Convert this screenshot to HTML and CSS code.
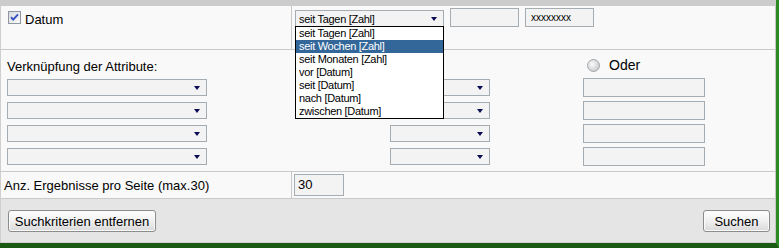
FILE: index.html
```html
<!DOCTYPE html>
<html lang="de">
<head>
	<meta charset="UTF-8">
	<title>Suche</title>
	<link rel="stylesheet" href="styles.css">
</head>
<body>
	<div class="frame">
		<div class="topbar"></div>
		<div class="form">
			<div class="row row-date">
				<div class="cell cell-label">
					<label class="check">
						<svg class="box" width="13" height="13" viewBox="0 0 13 13">
							<defs>
								<linearGradient id="cbg" x1="0" y1="0" x2="1" y2="1">
									<stop offset="0" stop-color="#d6d9dd"/>
									<stop offset="1" stop-color="#fbfbfb"/>
								</linearGradient>
							</defs>
							<rect x="0.5" y="0.5" width="12" height="12" fill="url(#cbg)" stroke="#8d97a3"/>
							<path d="M3 6.2 L5.2 8.6 L10 3.4" fill="none" stroke="#2f4fc4" stroke-width="1.8"/>
						</svg>
						<span>Datum</span>
					</label>
				</div>
				<div class="cell cell-date">
					<div class="pick">
						<div class="select select-wide"><span>seit Tagen [Zahl]</span><i class="arrow"></i></div>
						<ul class="pick-list">
							<li>seit Tagen [Zahl]</li>
							<li class="active">seit Wochen [Zahl]</li>
							<li>seit Monaten [Zahl]</li>
							<li>vor [Datum]</li>
							<li>seit [Datum]</li>
							<li>nach [Datum]</li>
							<li>zwischen [Datum]</li>
						</ul>
					</div>
					<div class="field field-date"></div>
					<div class="field field-date field-mask">xxxxxxxx</div>
				</div>
			</div>

			<div class="row row-attr">
				<div class="attr-grid">
					<div class="attr-title">Verknüpfung der Attribute:</div>
					<label class="attr-or">
						<svg width="13" height="13" viewBox="0 0 13 13">
							<defs>
								<radialGradient id="rbg" cx="0.4" cy="0.4" r="0.6">
									<stop offset="0" stop-color="#fbfbfb"/>
									<stop offset="1" stop-color="#c9cccf"/>
								</radialGradient>
							</defs>
							<circle cx="6.5" cy="6.5" r="6" fill="url(#rbg)" stroke="#a3a7ab"/>
						</svg>
						<span>Oder</span>
					</label>

					<div class="select attr-a"><span></span><i class="arrow"></i></div>
					<div class="select attr-b"><span></span><i class="arrow"></i></div>
					<div class="field attr-c"></div>

					<div class="select attr-a"><span></span><i class="arrow"></i></div>
					<div class="select attr-b"><span></span><i class="arrow"></i></div>
					<div class="field attr-c"></div>

					<div class="select attr-a"><span></span><i class="arrow"></i></div>
					<div class="select attr-b"><span></span><i class="arrow"></i></div>
					<div class="field attr-c"></div>

					<div class="select attr-a"><span></span><i class="arrow"></i></div>
					<div class="select attr-b"><span></span><i class="arrow"></i></div>
					<div class="field attr-c"></div>
				</div>
			</div>

			<div class="row row-count">
				<div class="cell cell-label cell-count">Anz. Ergebnisse pro Seite (max.30)</div>
				<div class="cell">
					<div class="field field-count">30</div>
				</div>
			</div>

			<div class="actions">
				<button class="btn btn-reset">Suchkriterien entfernen</button>
				<button class="btn btn-search">Suchen</button>
			</div>
		</div>
	</div>
</body>
</html>
```

FILE: styles.css
```css
*{
	margin:0;
	padding:0;
	box-sizing: border-box;
}
body{
	font-family: "Liberation Sans", Arial, sans-serif;
	font-size: 13px;
	color: #000;
	background: #fff;
}
.frame{
	width: 779px;
	height: 248px;
	border-right: 3px solid #2c8a23;
	border-bottom: 5px solid #1b5a12;
}
.topbar{
	height: 6px;
	background: #cccccc;
}
.form{
	border-left: 1px solid #cfcfcf;
	border-right: 1px solid #c6c6c6;
	background: #f9f9f9;
}
.row{
	display: flex;
	border-bottom: 1px solid #c9c9c9;
}
.cell-label{
	width: 291px;
	border-right: 1px solid #c9c9c9;
}

/* Datum */
.row-date{
	height: 44px;
}
.row-date .cell-label{
	padding: 5px 0 0 7px;
}
.check{
	display: flex;
	align-items: flex-start;
	line-height: 15px;
}
.check .box{
	flex: none;
	margin-right: 4px;
}
.check span{
	margin-top: 1px;
}
.cell-date{
	display: flex;
	align-items: flex-start;
	gap: 6px;
	padding: 2px 0 0 3px;
}
.pick{
	position: relative;
	margin-top: 2px;
}
.select{
	display: flex;
	align-items: center;
	justify-content: space-between;
	height: 17px;
	padding: 0 6px 0 3px;
	background: #f3f3f3;
	border: 1px solid #a5acb2;
	font-size: 11px;
	letter-spacing: -0.3px;
}
.select-wide{
	width: 149px;
}
.arrow{
	width: 0;
	height: 0;
	border-left: 3px solid transparent;
	border-right: 3px solid transparent;
	border-top: 4px solid #0b0b55;
}
.pick-list{
	position: absolute;
	top: 16px;
	left: 0;
	width: 149px;
	list-style: none;
	background: #fff;
	border: 1px solid #000;
	font-size: 11px;
	letter-spacing: -0.3px;
}
.pick-list li{
	height: 13px;
	line-height: 13px;
	padding-left: 3px;
	white-space: nowrap;
}
.pick-list li.active{
	background: #336699;
	color: #fff;
}
.field{
	height: 19px;
	background: #f3f3f3;
	border: 1px solid #a5acb2;
}
.field-date{
	width: 69px;
}
.field-mask{
	font-size: 10px;
	line-height: 17px;
	padding-left: 5px;
}

/* Attribute */
.row-attr{
	height: 122px;
}
.attr-grid{
	display: grid;
	grid-template-columns: 6px 200px 183px 100px 93px 122px;
	grid-template-rows: 28px repeat(4, 23px);
}
.attr-title{
	grid-column: 2 / 5;
	align-self: end;
	line-height: 15px;
	margin-bottom: 4px;
}
.attr-or{
	grid-column: 6;
	align-self: end;
	display: flex;
	align-items: center;
	gap: 9px;
	line-height: 15px;
	margin: 0 0 5px 4px;
	font-size: 14px;
}
.attr-or span{
	margin-top: 1px;
}
.attr-a{
	grid-column: 2;
	margin-top: 1px;
}
.attr-b{
	grid-column: 4;
	margin-top: 1px;
}
.attr-c{
	grid-column: 6;
}

/* Anzahl */
.row-count{
	height: 27px;
}
.cell-count{
	display: flex;
	align-items: center;
	padding-left: 3px;
}
.field-count{
	width: 50px;
	height: 22px;
	margin: 2px 0 0 2px;
	padding-left: 3px;
	line-height: 20px;
}

/* Buttons */
.actions{
	display: flex;
	justify-content: space-between;
	align-items: flex-start;
	height: 44px;
	padding: 11px 5px 0 7px;
	background: #e5e5e5;
	border-bottom: 1px solid #d2d2d2;
}
.btn{
	height: 22px;
	font-family: "Liberation Sans", Arial, sans-serif;
	font-size: 13px;
	color: #000;
	border: 1px solid #8c8c8c;
	border-radius: 3px;
	background: linear-gradient(#fefefe, #f0f0f0 50%, #d9d9d9);
	box-shadow: inset 0 0 0 1px #fafafa;
	cursor: pointer;
}
.btn-reset{
	width: 148px;
}
.btn-search{
	width: 67px;
}
```
